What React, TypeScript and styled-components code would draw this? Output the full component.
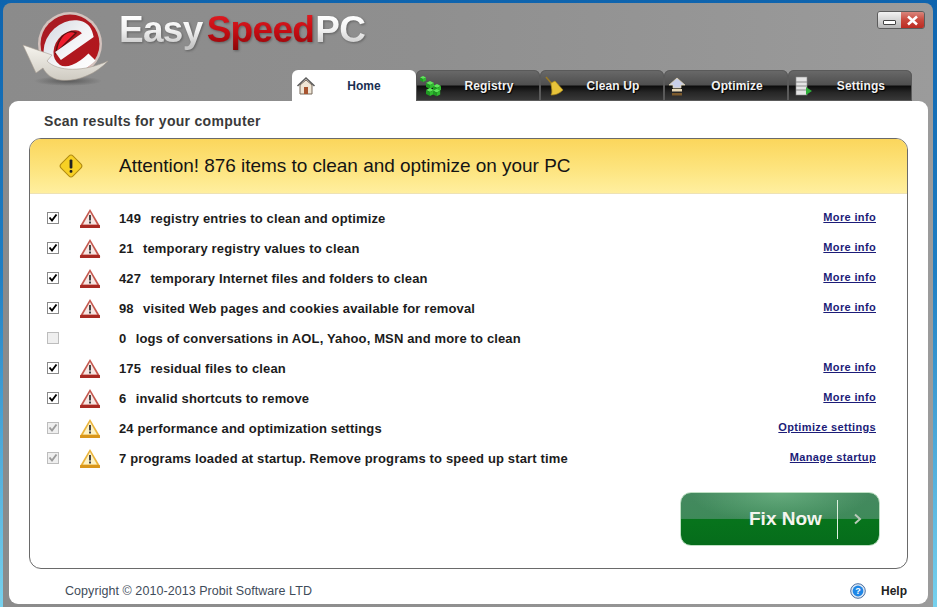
import styled, { createGlobalStyle } from "styled-components";

const GlobalStyle = createGlobalStyle`
  html, body {
    margin: 0;
    padding: 0;
    height: 100%;
    overflow: hidden;
    font-family: "Liberation Sans", Arial, sans-serif;
  }
  #root {
    height: 100%;
  }
`;

const Frame = styled.div`
  box-sizing: border-box;
  width: 937px;
  height: 607px;
  padding: 3px 4px 0 3px;
  background: linear-gradient(180deg, #0e64ae 0%, #1f7fc4 45%, #78d2ee 100%);
`;

const Shell = styled.div`
  display: flex;
  flex-direction: column;
  height: 100%;
  border-radius: 8px 8px 0 0;
  background: linear-gradient(90deg, #8b8b8b 0%, #8f8f8f 45%, #9b9b9b 100%);
`;

const Header = styled.header`
  display: flex;
  height: 98px;
  flex: none;
`;

const LogoMark = styled.svg`
  flex: none;
  width: 100px;
  height: 80px;
  margin: 5px 0 0 15px;
`;

const HeaderMain = styled.div`
  flex: 1;
  min-width: 0;
  display: flex;
  flex-direction: column;
  justify-content: space-between;
`;

const TopRow = styled.div`
  display: flex;
  align-items: flex-start;
  justify-content: space-between;
`;

const Brand = styled.div`
  display: flex;
  align-items: baseline;
  height: 48px;
  margin: 3px 0 0 1px;
  font-size: 37px;
  font-weight: 700;
  line-height: 48px;
  letter-spacing: -0.7px;
  filter: drop-shadow(1px 1px 1px rgba(60, 60, 60, 0.55));
`;

const BrandPart = styled.span<{ $red?: boolean }>`
  margin-left: ${(p) => (p.$red ? "4px" : "0")};
  margin-right: ${(p) => (p.$red ? "1px" : "0")};
  color: transparent;
  background: ${(p) =>
    p.$red
      ? "linear-gradient(180deg, #e01c22 15%, #c20c12 55%, #8e0508 90%)"
      : "linear-gradient(180deg, #ffffff 20%, #f2f2f2 50%, #c4c4c4 85%)"};
  -webkit-background-clip: text;
  background-clip: text;
`;

const WindowButtons = styled.div`
  display: flex;
  height: 16px;
  margin: 8px 8px 0 0;
  border: 1px solid #5c5c5c;
  border-radius: 3px;
  overflow: hidden;
`;

const WindowButton = styled.div<{ $close?: boolean }>`
  display: flex;
  align-items: center;
  justify-content: center;
  width: 23px;
  background: ${(p) =>
    p.$close
      ? "linear-gradient(180deg, #d9867c 0%, #c9483c 50%, #bb2b22 100%)"
      : "linear-gradient(180deg, #f2f2f2 0%, #d5d5d5 50%, #b5b5b5 100%)"};
`;

const MinimizeBar = styled.span`
  width: 11px;
  height: 3px;
  margin-top: 4px;
  background: #fff;
  border: 1px solid #444;
  border-radius: 1px;
`;

const Tabs = styled.nav`
  display: flex;
  align-self: flex-end;
  margin-right: 21px;
`;

const Tab = styled.div<{ $active?: boolean }>`
  box-sizing: border-box;
  display: flex;
  align-items: center;
  width: 124px;
  height: 31px;
  padding-left: 3px;
  border-radius: 6px 6px 0 0;
  font-size: 12px;
  font-weight: 700;
  letter-spacing: ${(p) => (p.$active ? "0" : "0.12px")};
  color: ${(p) => (p.$active ? "#1a2f52" : "#f2f2f2")};
  text-shadow: ${(p) => (p.$active ? "none" : "1px 1px 1px #000")};
  background: ${(p) =>
    p.$active
      ? "#fff"
      : "linear-gradient(180deg, #6a6a6a 0%, #4f4f4f 48%, #0c0c0c 52%, #262626 72%, #3a3a3a 100%)"};
  box-shadow: ${(p) => (p.$active ? "none" : "inset 0 0 0 1px #5a5a5a")};
`;

const TabIcon = styled.svg`
  flex: none;
  width: 22px;
  height: 22px;
`;

const TabLabel = styled.span<{ $active?: boolean }>`
  flex: 1;
  padding-right: ${(p) => (p.$active ? "5px" : "3px")};
  text-align: center;
`;

const Card = styled.main`
  flex: 1;
  display: flex;
  flex-direction: column;
  min-height: 0;
  margin: 0 5px 3px 6px;
  padding: 0 20px 0 20px;
  background: #fff;
  border-radius: 9px;
`;

const Title = styled.h1`
  flex: none;
  height: 37px;
  margin: 0;
  padding-left: 15px;
  font-size: 14px;
  font-weight: 700;
  line-height: 40px;
  letter-spacing: 0.3px;
  color: #3a3a3a;
`;

const Panel = styled.section`
  flex: 1;
  display: flex;
  flex-direction: column;
  min-height: 0;
  border: 1px solid #6a6a6a;
  border-radius: 12px;
  overflow: hidden;
`;

const Banner = styled.div`
  flex: none;
  display: flex;
  align-items: center;
  height: 54px;
  border-bottom: 1px solid #eee2b4;
  background: linear-gradient(180deg, #fbd65c 0%, #fde47e 55%, #ffef9f 100%);
`;

const BannerIcon = styled.svg`
  flex: none;
  width: 26px;
  height: 26px;
  margin: 0 35px 0 28px;
`;

const BannerText = styled.div`
  font-size: 19px;
  letter-spacing: -0.03px;
  color: #141414;
`;

const List = styled.div`
  display: flex;
  flex-direction: column;
  padding: 9px 31px 0 17px;
`;

const Row = styled.div`
  display: grid;
  grid-template-columns: 32px 40px 1fr auto;
  align-items: center;
  height: 30px;
`;

const CheckBox = styled.span<{ $state: "on" | "muted" | "off" }>`
  box-sizing: border-box;
  display: flex;
  align-items: center;
  justify-content: center;
  width: 12px;
  height: 12px;
  border: 1px solid ${(p) => (p.$state === "on" ? "#8a8a8a" : "#bdbdbd")};
  background: ${(p) => (p.$state === "on" ? "#fff" : "#efefef")};
`;

const CheckMark = styled.svg`
  width: 10px;
  height: 10px;
`;

const WarnCell = styled.div`
  display: flex;
  align-items: center;
`;

const WarnIcon = styled.svg`
  width: 22px;
  height: 21px;
`;

const RowText = styled.div`
  font-size: 13px;
  font-weight: 700;
  letter-spacing: 0.14px;
  color: #1c1c1c;
`;

const Count = styled.span<{ $gap?: boolean }>`
  margin-right: ${(p) => (p.$gap ? "5.5px" : "0")};
`;

const MoreLink = styled.a`
  margin-top: -2px;
  font-size: 11px;
  font-weight: 700;
  letter-spacing: 0.35px;
  color: #1c1c78;
  text-decoration: underline;
  cursor: pointer;
`;

const ActionRow = styled.div`
  display: flex;
  justify-content: flex-end;
  padding: 19px 27px 0 0;
`;

const FixButton = styled.button`
  box-sizing: border-box;
  display: flex;
  align-items: center;
  width: 200px;
  height: 54px;
  padding: 0;
  border: 1px solid #bfe0c4;
  border-radius: 11px;
  font-family: inherit;
  color: #f4f4ee;
  cursor: pointer;
  background:
    radial-gradient(ellipse 90px 30px at 50% 0, rgba(140, 210, 160, 0.45), transparent),
    linear-gradient(180deg, #44895f 0%, #3f8a5a 49%, #07741c 50%, #066c1b 100%);
`;

const FixLabel = styled.span`
  width: 156px;
  padding-left: 68px;
  box-sizing: border-box;
  font-size: 19px;
  font-weight: 700;
  text-align: left;
  white-space: nowrap;
`;

const FixDivider = styled.span`
  width: 1px;
  height: 39px;
  background: #dff0e0;
`;

const FixArrow = styled.svg`
  width: 10px;
  height: 12px;
  margin-left: 15px;
`;

const Footer = styled.footer`
  flex: none;
  display: flex;
  align-items: center;
  justify-content: space-between;
  height: 35px;
  padding: 9px 1px 0 36px;
  box-sizing: border-box;
`;

const Copyright = styled.span`
  font-size: 12.5px;
  letter-spacing: 0.06px;
  color: #3f4c5a;
`;

const HelpBox = styled.div`
  display: flex;
  align-items: center;
  gap: 15px;
  font-size: 12px;
  font-weight: 700;
  color: #222;
`;

const HelpIcon = styled.svg`
  width: 16px;
  height: 16px;
`;

const Logo = () => (
  <LogoMark viewBox="18 8 100 80">
    <defs>
      <radialGradient id="shadow">
        <stop offset="0" stopColor="#444" stopOpacity="0.7" />
        <stop offset="1" stopColor="#444" stopOpacity="0" />
      </radialGradient>
      <linearGradient id="eBody" x1="0" y1="0" x2="1" y2="1">
        <stop offset="0" stopColor="#d8dce4" />
        <stop offset="0.5" stopColor="#f4f4f6" />
        <stop offset="1" stopColor="#ffffff" />
      </linearGradient>
      <linearGradient id="disc" x1="0" y1="0" x2="1" y2="1">
        <stop offset="0" stopColor="#a71c24" />
        <stop offset="1" stopColor="#b5161c" />
      </linearGradient>
      <linearGradient id="swoosh" x1="0" y1="0" x2="0" y2="1">
        <stop offset="0" stopColor="#f6f4ee" />
        <stop offset="1" stopColor="#cfcbc2" />
      </linearGradient>
    </defs>
    <ellipse cx="68" cy="81" rx="34" ry="5" fill="url(#shadow)" />
    <circle cx="70" cy="44" r="32" fill="#d3c2bd" />
    <circle cx="70" cy="44" r="29.5" fill="url(#disc)" />
    <path d="M56 53 L76 33 C68 28 58 36 56 53 Z" fill="#ee1c2c" stroke="#5a1010" strokeWidth="1.5" />
    <path
      d="M58 56 L88 35 C85 23 70 22 58 32 C46 43 45 61 57 69 C67 75 81 68 92 57"
      fill="none"
      stroke="url(#eBody)"
      strokeWidth="10"
    />
    <path
      d="M23 45 L52 55 L47 61 C58 72 84 72 108 61 C94 76 74 82 60 80 C52 79 46 74 43 68 L36 73 Z"
      fill="url(#swoosh)"
      stroke="#a89e92"
      strokeWidth="0.6"
    />
  </LogoMark>
);

const HomeIcon = () => (
  <TabIcon viewBox="0 0 22 22">
    <path d="M5 10 V19 H17 V10 L11 5 Z" fill="#efe6d6" stroke="#77685a" strokeWidth="1" />
    <path d="M2.5 11 L11 3 L19.5 11" fill="none" stroke="#5d5d5d" strokeWidth="1.6" />
    <rect x="9" y="12" width="4" height="7" fill="#a7542f" />
  </TabIcon>
);

const Cube = ({ x, y, s }: { x: number; y: number; s: number }) => (
  <g transform={`translate(${x} ${y}) scale(${s})`}>
    <path d="M0 2 L4 0 L8 2 L4 4 Z" fill="#5fe85a" />
    <path d="M0 2 L4 4 V8 L0 6 Z" fill="#1f9b22" />
    <path d="M8 2 L4 4 V8 L8 6 Z" fill="#2fbb2e" />
  </g>
);

const CubesIcon = () => (
  <TabIcon viewBox="0 0 22 22">
    <Cube x={1} y={1} s={0.75} />
    <Cube x={7} y={6} s={1} />
    <Cube x={14} y={9} s={1} />
    <Cube x={7} y={13} s={1} />
    <Cube x={14} y={14} s={0.9} />
  </TabIcon>
);

const BroomIcon = () => (
  <TabIcon viewBox="0 0 22 22">
    <path d="M3 2 L9 9" stroke="#9a7a24" strokeWidth="1.6" />
    <path d="M8 8 L12 6 L20 15 C16 19 12 20 8 20 C10 17 8 12 8 8 Z" fill="#e8c43a" stroke="#a98a1c" strokeWidth="0.7" />
  </TabIcon>
);

const OptimizeIcon = () => (
  <TabIcon viewBox="0 0 22 22">
    <path d="M10 3 L18 10 H14 V13 H6 V10 H2 Z" fill="#c9cfe8" stroke="#e6d9b0" strokeWidth="0.7" />
    <rect x="5" y="14" width="10" height="2.5" fill="#e8d9b8" />
    <rect x="5" y="18" width="10" height="2.5" fill="#7d5a2c" />
  </TabIcon>
);

const SettingsIcon = () => (
  <TabIcon viewBox="0 0 22 22">
    <rect x="5" y="2" width="11" height="18" fill="#e4e4e4" stroke="#8a8a8a" strokeWidth="0.6" />
    <path d="M5 7 H16 M5 11 H16 M5 15 H16" stroke="#8a8a8a" strokeWidth="1" />
    <path d="M15 12 L21 16 L15 20 Z" fill="#2fae3a" />
  </TabIcon>
);

const Warn = ({ tone }: { tone: "red" | "amber" }) => {
  const edge = tone === "red" ? "#c4574d" : "#eab33a";
  const base = tone === "red" ? "#a92a22" : "#d9961a";
  const inner = tone === "red" ? "#f6e6e3" : "#fcf2c6";
  return (
    <WarnIcon viewBox="0 0 22 21">
      <path d="M11 1 L21 18 Q21.5 20 20 20 H2 Q0.5 20 1 18 Z" fill={edge} />
      <path d="M1.2 17 H20.8 L21 20 H1 Z" fill={base} />
      <path d="M11 4 L18 16.5 H4 Z" fill={inner} />
      <rect x="10" y="7" width="2" height="5.5" fill="#444" />
      <rect x="10" y="13.5" width="2" height="2" fill="#444" />
    </WarnIcon>
  );
};

const Check = ({ state }: { state: "on" | "muted" | "off" }) => (
  <CheckBox $state={state}>
    {state !== "off" && (
      <CheckMark viewBox="0 0 10 10">
        <path
          d="M1.5 4.5 L4 7.5 L8.5 1.5"
          fill="none"
          stroke={state === "on" ? "#000" : "#9a9a9a"}
          strokeWidth="1.9"
        />
      </CheckMark>
    )}
  </CheckBox>
);

type Item = {
  count: string;
  text: string;
  gap: boolean;
  state: "on" | "muted" | "off";
  tone?: "red" | "amber";
  link?: string;
};

const items: Item[] = [
  { count: "149", text: "registry entries to clean and optimize", gap: true, state: "on", tone: "red", link: "More info" },
  { count: "21", text: "temporary registry values to clean", gap: true, state: "on", tone: "red", link: "More info" },
  { count: "427", text: "temporary Internet files and folders to clean", gap: true, state: "on", tone: "red", link: "More info" },
  { count: "98", text: "visited Web pages and cookies available for removal", gap: true, state: "on", tone: "red", link: "More info" },
  { count: "0", text: "logs of conversations in AOL, Yahoo, MSN and more to clean", gap: true, state: "off" },
  { count: "175", text: "residual files to clean", gap: true, state: "on", tone: "red", link: "More info" },
  { count: "6", text: "invalid shortcuts to remove", gap: true, state: "on", tone: "red", link: "More info" },
  { count: "24", text: "performance and optimization settings", gap: false, state: "muted", tone: "amber", link: "Optimize settings" },
  { count: "7", text: "programs loaded at startup. Remove programs to speed up start time", gap: false, state: "muted", tone: "amber", link: "Manage startup" },
];

export default function App() {
  return (
    <>
      <GlobalStyle />
      <Frame>
        <Shell>
          <Header>
            <Logo />
            <HeaderMain>
              <TopRow>
                <Brand>
                  <BrandPart>Easy</BrandPart>
                  <BrandPart $red>Speed</BrandPart>
                  <BrandPart>PC</BrandPart>
                </Brand>
                <WindowButtons>
                  <WindowButton>
                    <MinimizeBar />
                  </WindowButton>
                  <WindowButton $close>
                    <svg width="13" height="11" viewBox="0 0 13 11">
                      <path d="M2 1.5 L11 9.5 M11 1.5 L2 9.5" stroke="#fff" strokeWidth="2.6" />
                    </svg>
                  </WindowButton>
                </WindowButtons>
              </TopRow>
              <Tabs>
                <Tab $active>
                  <HomeIcon />
                  <TabLabel $active>Home</TabLabel>
                </Tab>
                <Tab>
                  <CubesIcon />
                  <TabLabel>Registry</TabLabel>
                </Tab>
                <Tab>
                  <BroomIcon />
                  <TabLabel>Clean Up</TabLabel>
                </Tab>
                <Tab>
                  <OptimizeIcon />
                  <TabLabel>Optimize</TabLabel>
                </Tab>
                <Tab>
                  <SettingsIcon />
                  <TabLabel>Settings</TabLabel>
                </Tab>
              </Tabs>
            </HeaderMain>
          </Header>
          <Card>
            <Title>Scan results for your computer</Title>
            <Panel>
              <Banner>
                <BannerIcon viewBox="0 0 26 26">
                  <rect x="4.5" y="4.5" width="17" height="17" rx="3" transform="rotate(45 13 13)" fill="#f7d024" stroke="#b08a10" strokeWidth="1" />
                  <rect x="11.6" y="6.5" width="2.8" height="9" rx="1" fill="#222" />
                  <rect x="11.6" y="17" width="2.8" height="2.8" rx="1" fill="#222" />
                </BannerIcon>
                <BannerText>Attention! 876 items to clean and optimize on your PC</BannerText>
              </Banner>
              <List>
                {items.map((item) => (
                  <Row key={item.count}>
                    <Check state={item.state} />
                    <WarnCell>{item.tone ? <Warn tone={item.tone} /> : null}</WarnCell>
                    <RowText>
                      <Count $gap={item.gap}>{item.count}</Count> {item.text}
                    </RowText>
                    {item.link ? <MoreLink>{item.link}</MoreLink> : <span />}
                  </Row>
                ))}
              </List>
              <ActionRow>
                <FixButton>
                  <FixLabel>Fix Now</FixLabel>
                  <FixDivider />
                  <FixArrow viewBox="0 0 10 12">
                    <path d="M2 1.5 L7 6 L2 10.5" fill="none" stroke="#b9c9b9" strokeWidth="2" />
                  </FixArrow>
                </FixButton>
              </ActionRow>
            </Panel>
            <Footer>
              <Copyright>Copyright © 2010-2013 Probit Software LTD</Copyright>
              <HelpBox>
                <HelpIcon viewBox="0 0 16 16">
                  <circle cx="8" cy="8" r="7.3" fill="#dfe9f5" stroke="#4a6fa0" strokeWidth="1" />
                  <circle cx="8" cy="8" r="5.4" fill="#1e86e6" />
                  <text x="8" y="11.2" fontSize="9" fontWeight="700" textAnchor="middle" fill="#fff">?</text>
                </HelpIcon>
                Help
              </HelpBox>
            </Footer>
          </Card>
        </Shell>
      </Frame>
    </>
  );
}
